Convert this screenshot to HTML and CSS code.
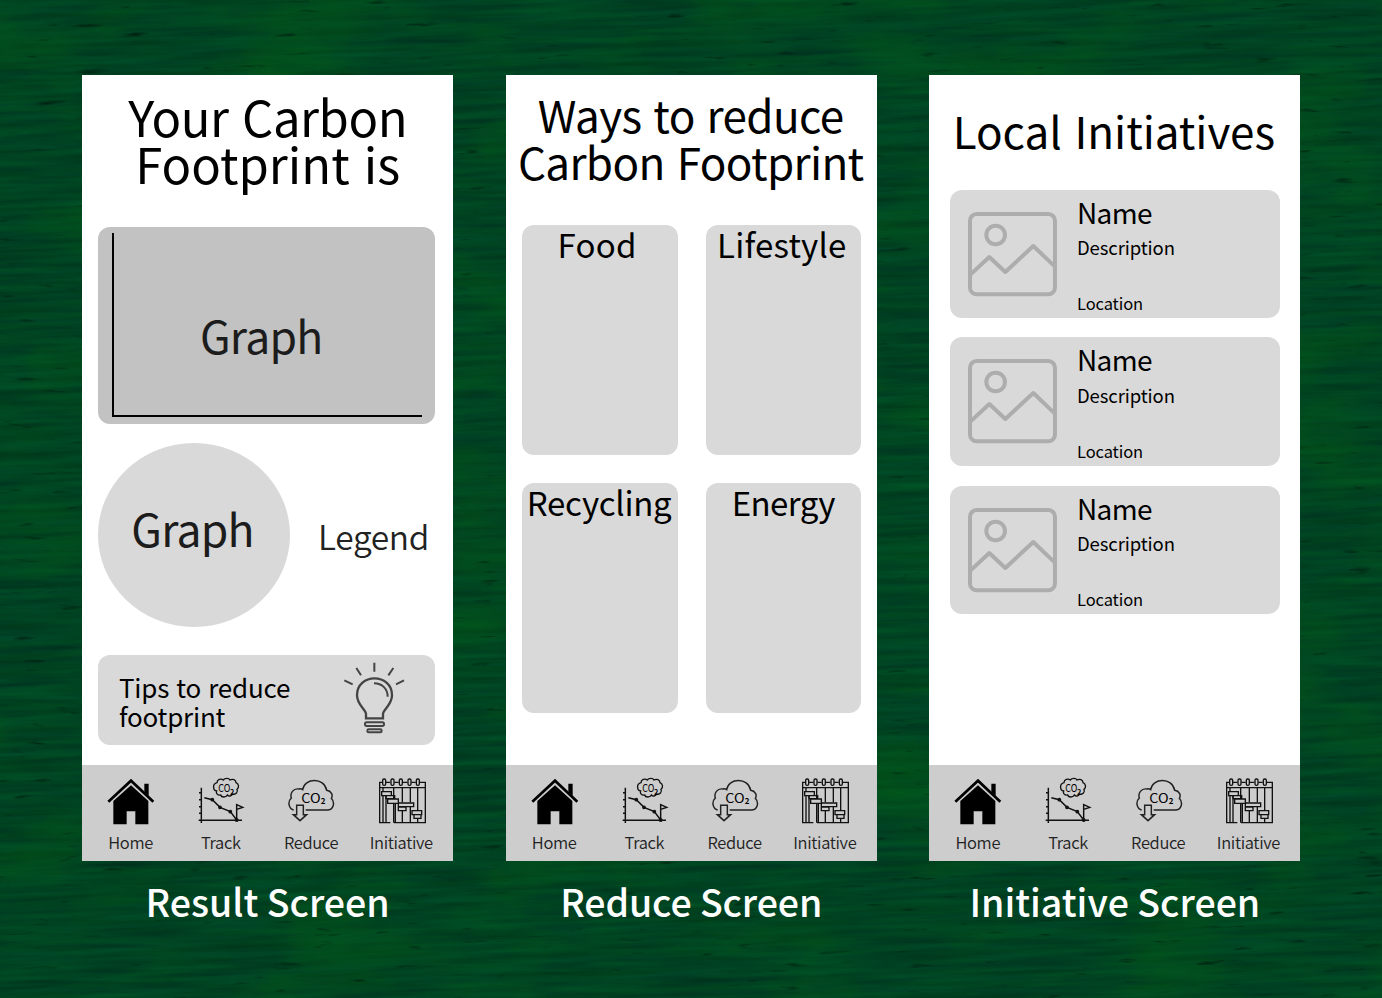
FILE: index.html
```
<!DOCTYPE html>
<html lang="en">
<head>
<meta charset="utf-8">
<title>Carbon footprint app screens</title>
<link rel="stylesheet" href="styles.css">
</head>
<body>
<svg class="wood" width="1382" height="998" aria-hidden="true">
  <filter id="grain" x="0" y="0" width="100%" height="100%" color-interpolation-filters="sRGB">
    <feTurbulence type="fractalNoise" baseFrequency=".009 .16" numOctaves="5" seed="7"/>
    <feColorMatrix values="0 0 0 0 0  .14 .05 0 0 .165  .06 -.03 0 0 .118  0 0 0 0 1"/>
  </filter>
  <filter id="patches" x="0" y="0" width="100%" height="100%" color-interpolation-filters="sRGB">
    <feTurbulence type="fractalNoise" baseFrequency=".007 .014" numOctaves="6" seed="12"/>
    <feColorMatrix values="0 0 0 0 .01  0 0 0 0 .35  0 0 0 0 .09  1.6 0 0 0 -.77"/>
  </filter>
  <filter id="cracks" x="0" y="0" width="100%" height="100%" color-interpolation-filters="sRGB">
    <feTurbulence type="fractalNoise" baseFrequency=".024 .17" numOctaves="4" seed="31"/>
    <feColorMatrix values="0 0 0 0 0  0 0 0 0 .12  0 0 0 0 .06  4 0 0 0 -2.8"/>
  </filter>
  <g transform="rotate(-2 691 499) translate(-40 -40)">
    <rect width="1462" height="1078" filter="url(#grain)"/>
    <rect width="1462" height="1078" filter="url(#patches)"/>
    <rect width="1462" height="1078" filter="url(#cracks)"/>
  </g>
</svg>

<svg class="defs" width="0" height="0" aria-hidden="true">
  <symbol id="home" viewBox="78 50 144 144">
    <path d="M190 70h13v37l-13-12z"/>
    <path d="M82 124 150 61l67 63" fill="none" stroke="#000" stroke-width="8"/>
    <path d="m150 75 52 47v70h-39v-39h-26v39H97v-70z"/>
  </symbol>
  <symbol id="track" viewBox="348 50 144 144">
    <g fill="none" stroke="#111" stroke-width="4.4">
      <path d="M361 82v106M353 180h130M354 97h7M354 118h7M354 139h7M354 159h7"/>
      <path d="m370 112 24 6 23 23 31 13 19 25v-46l18 8-18 6"/>
      <circle cx="394" cy="118" r="3.5"/><circle cx="417" cy="141" r="3.5"/><circle cx="448" cy="154" r="3.5"/><circle cx="467" cy="179" r="3.5"/>
      <path stroke-width="4" d="M408 67c0-9 12-14 19-8 5-7 17-6 20 0 8-5 18 0 18 8 9 4 10 15 3 20 4 8-4 17-13 14-3 7-12 8-16 3-4 8-18 8-20 0-9 2-15-5-12-12-12-2-13-22 1-25z"/>
    </g>
    <text x="412" y="96" font-size="33" textLength="36" lengthAdjust="spacingAndGlyphs">CO</text>
    <text x="447" y="104" font-size="22" font-weight="700">2</text>
  </symbol>
  <symbol id="reduce" viewBox="58 50 144 144">
    <path d="M78 149c-15-4-19-25-7-36-5-14 6-30 23-27 6-2 8 0 11 2 5-36 65-38 72 2 14 2 20 14 14 24 13 14 5 35-12 35h-65" fill="none" stroke="#222" stroke-width="4.4"/>
    <path d="M87 135h20v28h10l-20 18-20-18h10z" fill="none" stroke="#222" stroke-width="4.4"/>
    <text x="101" y="129" font-size="38" textLength="58" lengthAdjust="spacingAndGlyphs">CO</text>
    <text x="159" y="130" font-size="24" font-weight="700">2</text>
  </symbol>
  <symbol id="initiative" viewBox="330 50 144 144">
    <g fill="none" stroke="#111" stroke-width="4">
      <path d="M343 66h-8v121h32M378 187h94V66h-16M354 66h13M379 66h13M405 66h13M430 66h13M335 82h137"/>
      <path d="M345 82v12M345 106v81M354 106v81M377 82v32M377 130v57M382 130v57M403 82v44M403 152v35M427 82v44M427 140v47M449 82v68M449 174v13"/>
      <rect x="344" y="56" width="9" height="19" rx="4"/><rect x="369" y="56" width="9" height="19" rx="4"/><rect x="394" y="56" width="9" height="19" rx="4"/><rect x="420" y="56" width="9" height="19" rx="4"/><rect x="445" y="56" width="9" height="19" rx="4"/>
      <path d="M341 94h29v12h-29zM354 106h26v9h-26zM359 116h32v13h-32zM391 128h46v11h-46zM391 140h23v11h-23zM432 151h29v12h-29zM438 163h21v11h-21z"/>
    </g>
  </symbol>
  <symbol id="image" viewBox="82 93 274 258">
    <g fill="none" stroke="#adadad" stroke-width="12" stroke-linejoin="round">
      <rect x="91" y="102" width="255" height="241" rx="20"/>
      <circle cx="168" cy="165" r="28"/>
      <path d="m92 284 57-53 48 45 84-78 64 61"/>
    </g>
  </symbol>
</svg>

<main class="board">
  <section class="column">
    <div class="phone">
      <h1 class="title title-result"><span class="your">Your Carbon</span><span>Footprint is</span></h1>
      <div class="chart"><div class="axes"><span>Graph</span></div></div>
      <div class="summary"><div class="pie">Graph</div><span class="legend">Legend</span></div>
      <div class="tips">
        <p>Tips to reduce<br>footprint</p>
        <svg class="bulb" viewBox="35 30 195 225">
          <g fill="none" stroke="#444" stroke-width="6">
            <path d="m42 91 25 12M78 54l14 22M132 38v27M189 54l-15 22M221 91l-24 12"/>
            <path d="M107 205v-13c0-14-27-26-27-56 0-68 105-68 105 0 0 30-27 42-27 56v13z" stroke-width="7"/>
            <path d="M131 100c25 0 41 17 41 40"/>
            <rect x="104" y="217" width="57" height="11" rx="5"/>
            <rect x="111" y="238" width="43" height="9" rx="4"/>
          </g>
        </svg>
      </div>
      <nav class="nav">
        <a><svg><use href="#home"/></svg><span>Home</span></a>
        <a><svg><use href="#track"/></svg><span>Track</span></a>
        <a><svg><use href="#reduce"/></svg><span>Reduce</span></a>
        <a><svg><use href="#initiative"/></svg><span>Initiative</span></a>
      </nav>
    </div>
    <h2 class="caption">Result Screen</h2>
  </section>

  <section class="column">
    <div class="phone">
      <h1 class="title title-reduce"><span>Ways to reduce</span><span class="wide">Carbon Footprint</span></h1>
      <div class="categories">
        <div class="food">Food</div>
        <div class="lifestyle">Lifestyle</div>
        <div class="recycling">Recycling</div>
        <div class="energy">Energy</div>
      </div>
      <nav class="nav">
        <a><svg><use href="#home"/></svg><span>Home</span></a>
        <a><svg><use href="#track"/></svg><span>Track</span></a>
        <a><svg><use href="#reduce"/></svg><span>Reduce</span></a>
        <a><svg><use href="#initiative"/></svg><span>Initiative</span></a>
      </nav>
    </div>
    <h2 class="caption caption-reduce">Reduce Screen</h2>
  </section>

  <section class="column">
    <div class="phone">
      <h1 class="title title-local"><span>Local Initiatives</span></h1>
      <div class="list">
        <article class="item"><svg><use href="#image"/></svg><div><h3>Name</h3><p>Description</p><small>Location</small></div></article>
        <article class="item"><svg><use href="#image"/></svg><div><h3>Name</h3><p>Description</p><small>Location</small></div></article>
        <article class="item last"><svg><use href="#image"/></svg><div><h3>Name</h3><p>Description</p><small>Location</small></div></article>
      </div>
      <nav class="nav">
        <a><svg><use href="#home"/></svg><span>Home</span></a>
        <a><svg><use href="#track"/></svg><span>Track</span></a>
        <a><svg><use href="#reduce"/></svg><span>Reduce</span></a>
        <a><svg><use href="#initiative"/></svg><span>Initiative</span></a>
      </nav>
    </div>
    <h2 class="caption">Initiative Screen</h2>
  </section>
</main>
</body>
</html>
```
FILE: styles.css
```
* { box-sizing: border-box; margin: 0; padding: 0; }
body {
  width: 1382px;
  height: 998px;
  overflow: hidden;
  background: #004422;
  color: #000;
  font-family: "Noto Sans CJK SC", "Noto Sans", sans-serif;
}
.wood { position: absolute; left: 0; top: 0; }
.defs { position: absolute; }
.board {
  position: relative;
  display: flex;
  gap: 52.3px;
  padding: 74.8px 0 0 82px;
}
.column { width: 371.3px; }
.phone {
  display: flex;
  flex-direction: column;
  height: 786px;
  background: #fff;
}

.title {
  display: flex;
  flex-direction: column;
  align-items: center;
  line-height: 47px;
  font-weight: 400;
  white-space: nowrap;
}
.title-result { height: 152px; padding-top: 17px; font-size: 49px; word-spacing: 3px; }
.title-result .your { letter-spacing: -.45px; }
.title-reduce { height: 150px; padding: 16px 1px 0 0; font-size: 44px; letter-spacing: -.6px; word-spacing: 2.5px; }
.title-reduce .wide { letter-spacing: -.65px; word-spacing: 3px; }
.title-local { height: 115px; padding: 32px 2px 0 0; font-size: 44px; letter-spacing: -.05px; word-spacing: 3px; }

.chart {
  width: 336.5px;
  height: 197px;
  margin-left: 16px;
  padding: 6px 0 0 14px;
  border-radius: 12px;
  background: #c2c2c2;
}
.axes {
  width: 310px;
  height: 184px;
  padding: 72px 0 0 86px;
  border: solid #000;
  border-width: 0 0 2px 2px;
  color: #1c1c1c;
  font-size: 44.5px;
  line-height: 60px;
  letter-spacing: -.8px;
}
.summary { display: flex; margin: 18.8px 0 0 16px; }
.pie {
  width: 192px;
  height: 184px;
  padding: 55px 3px 0 0;
  border-radius: 50%;
  background: #d9d9d9;
  color: #1c1c1c;
  font-size: 44.5px;
  line-height: 60px;
  letter-spacing: -.8px;
  text-align: center;
}
.legend {
  padding: 68px 0 0 28px;
  color: #222;
  font-size: 33.5px;
  font-weight: 350;
  line-height: 50px;
  letter-spacing: -.35px;
}
.tips {
  display: flex;
  width: 336.5px;
  height: 89.7px;
  margin: 28.6px 0 0 16px;
  padding-left: 21px;
  border-radius: 12px;
  background: #d9d9d9;
}
.tips p {
  width: 223px;
  padding-top: 16.5px;
  font-size: 26px;
  line-height: 29px;
  letter-spacing: -.2px;
  word-spacing: 1.5px;
}
.bulb { width: 65px; height: 75px; margin-top: 5px; }

.categories {
  display: grid;
  grid-template-columns: 156px 155.5px;
  grid-auto-rows: 230px;
  gap: 27.8px 28px;
  padding-left: 16px;
}
.categories div {
  border-radius: 12px;
  background: #d9d9d9;
  font-size: 33px;
  line-height: 38px;
  text-align: center;
  white-space: nowrap;
}
.categories .food { letter-spacing: .2px; padding-right: 6px; padding-left: 1px; }
.categories .lifestyle { letter-spacing: .2px; padding-right: 3px; }
.categories .recycling { letter-spacing: -.25px; padding-right: 1px; }
.categories .energy { letter-spacing: -.55px; }

.list { padding-left: 21px; }
.item {
  display: flex;
  width: 329.8px;
  height: 128.5px;
  margin-bottom: 19px;
  padding-left: 17px;
  border-radius: 12px;
  background: #d9d9d9;
}
.item.last { margin-top: 20px; }
.item svg { width: 91.3px; height: 86px; margin-top: 21px; }
.item div { display: flex; flex-direction: column; padding-left: 18.5px; }
.item h3 { padding-top: 4px; font-size: 28px; font-weight: 400; line-height: 36px; letter-spacing: -.65px; }
.item p { padding-top: 3.4px; font-size: 18.5px; line-height: 28px; letter-spacing: -.1px; }
.item small { padding-top: 30px; font-size: 16.5px; line-height: 24px; letter-spacing: -.1px; }

.nav {
  display: grid;
  grid-template-columns: repeat(4, 1fr);
  height: 96px;
  margin-top: auto;
  padding: 12px 6.5px 0 4px;
  background: #cdcdcd;
}
.nav a { display: flex; flex-direction: column; align-items: center; }
.nav svg { width: 48px; height: 48px; }
.nav span {
  margin-right: 1px;
  color: #222;
  font-size: 16.5px;
  font-weight: 350;
  line-height: 34px;
  letter-spacing: -.35px;
}
.caption {
  padding-top: 10px;
  color: #fff;
  font-size: 37.5px;
  font-weight: 500;
  line-height: 60px;
  text-align: center;
}
.caption-reduce { letter-spacing: -.1px; }
```
